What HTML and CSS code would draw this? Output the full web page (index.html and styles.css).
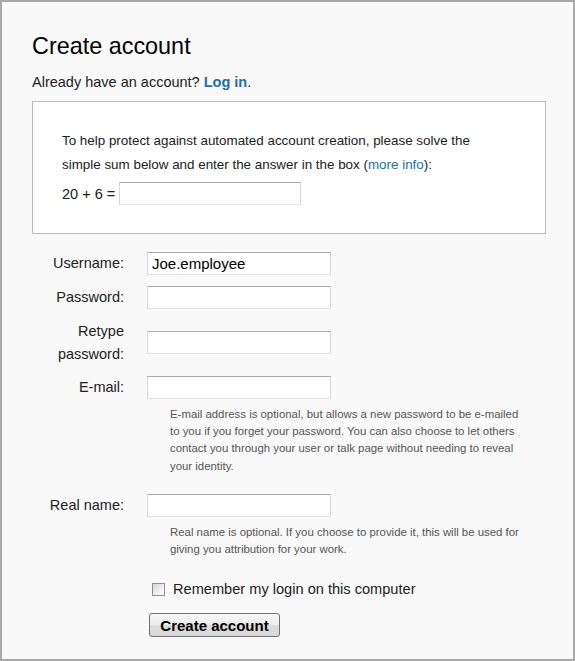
FILE: index.html
```html
<!DOCTYPE html>
<html lang="en">
<head>
<meta charset="utf-8">
<title>Create account</title>
<link rel="stylesheet" href="styles.css">
</head>
<body>
<div class="page">
  <h1 class="title">Create account</h1>
  <p class="already">Already have an account? <a class="link strong" href="#">Log in</a>.</p>

  <div class="captcha">
    <p class="captcha-text">To help protect against automated account creation, please solve the<br>simple sum below and enter the answer in the box (<a class="link" href="#">more info</a>):</p>
    <div class="sum">
      <span>20 + 6 =</span>
      <input class="field captcha-field" type="text">
    </div>
  </div>

  <form class="form">
    <div class="row first">
      <label class="label">Username:</label>
      <input class="field" type="text" value="Joe.employee">
    </div>
    <div class="row">
      <label class="label">Password:</label>
      <input class="field" type="password">
    </div>
    <div class="row">
      <label class="label">Retype password:</label>
      <input class="field" type="password">
    </div>
    <div class="row">
      <label class="label">E-mail:</label>
      <input class="field" type="text">
    </div>
    <p class="help">E-mail address is optional, but allows a new password to be e-mailed<br>to you if you forget your password. You can also choose to let others<br>contact you through your user or talk page without needing to reveal<br>your identity.</p>
    <div class="row spaced">
      <label class="label">Real name:</label>
      <input class="field" type="text">
    </div>
    <p class="help">Real name is optional. If you choose to provide it, this will be used for<br>giving you attribution for your work.</p>
    <div class="remember">
      <input class="check" type="checkbox" id="remember">
      <label for="remember" class="remember-label">Remember my login on this computer</label>
    </div>
    <div class="actions">
      <button class="button" type="button">Create account</button>
    </div>
  </form>
</div>
</body>
</html>
```
FILE: styles.css
```css
html, body {
  margin: 0;
  padding: 0;
}
body {
  font-family: "Liberation Sans", Arial, sans-serif;
  color: #222;
  background: #f9f9f9;
}
.page {
  box-sizing: border-box;
  width: 575px;
  height: 661px;
  border: 2px solid #a9a9a9;
  background: #f9f9f9;
  padding: 30px 0 0 30px;
  overflow: hidden;
}
.title {
  margin: 0;
  font-size: 23.4px;
  line-height: 28px;
  font-weight: normal;
  color: #000;
}
.already {
  margin: 12px 0 0;
  font-size: 14.5px;
  line-height: 20px;
}
.link {
  color: #1f6fab;
  text-decoration: none;
}
.strong {
  font-weight: bold;
}
.captcha {
  box-sizing: border-box;
  width: 514px;
  margin-top: 9px;
  border: 1px solid #bbb;
  background: #fff;
  padding: 27px 29px 28px 29px;
}
.captcha-text {
  margin: 0;
  font-size: 13.4px;
  line-height: 23.5px;
  white-space: nowrap;
}
.sum {
  display: flex;
  align-items: center;
  gap: 4px;
  margin-top: 6px;
  font-size: 14.5px;
}
.field {
  box-sizing: border-box;
  width: 184px;
  height: 23px;
  margin: 0;
  padding: 0 4px;
  border: 1px solid #d6d6dc;
  border-top-color: #ababab;
  border-bottom-color: #e4e4ea;
  background: #fff;
  font-family: "Liberation Sans", Arial, sans-serif;
  font-size: 15px;
  color: #000;
  outline: none;
}
.captcha-field {
  width: 182px;
}
.form {
  margin-top: 18px;
}
.row {
  display: grid;
  grid-template-columns: 92px 184px;
  column-gap: 23px;
  align-items: center;
  margin-top: 11px;
}
.row.first {
  margin-top: 0;
}
.row.spaced {
  margin-top: 19px;
}
.label {
  text-align: right;
  font-size: 14.5px;
  line-height: 22.5px;
  color: #222;
}
.help {
  margin: 7px 0 0 138px;
  font-size: 11.4px;
  line-height: 17.2px;
  color: #555;
  white-space: nowrap;
}
.remember {
  display: flex;
  align-items: center;
  margin: 20px 0 0 120px;
  height: 22px;
}
.check {
  appearance: none;
  -webkit-appearance: none;
  box-sizing: border-box;
  width: 13px;
  height: 13px;
  margin: 0 8px 0 0;
  border: 1px solid #8e8f8f;
  background: linear-gradient(135deg, #d6d6d6 0%, #f4f4f4 70%, #ffffff 100%);
}
.remember-label {
  font-size: 14.6px;
  line-height: 22px;
  color: #222;
}
.actions {
  margin: 13px 0 0 117px;
}
.button {
  box-sizing: border-box;
  width: 131px;
  height: 24px;
  margin: 0;
  padding: 0;
  border: 1px solid #707070;
  border-radius: 3px;
  background: linear-gradient(#f7f7f7 0%, #ececec 50%, #dcdcdc 51%, #d9d9d9 100%);
  font-family: "Liberation Sans", Arial, sans-serif;
  font-size: 15px;
  font-weight: bold;
  color: #000;
}
```
